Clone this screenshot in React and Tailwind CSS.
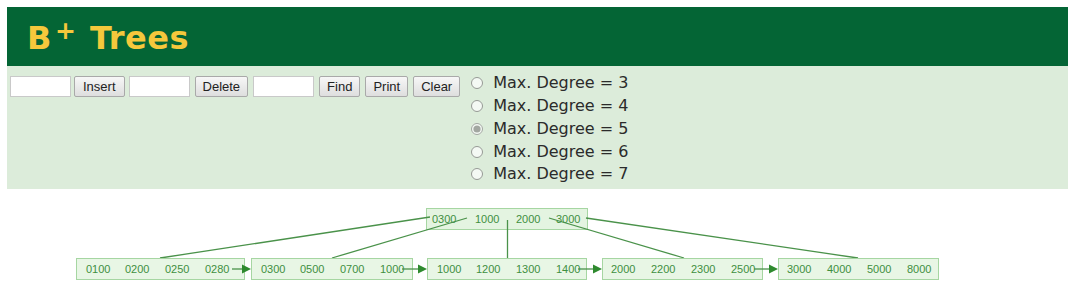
import React from 'react';

const leaves = [
    { x: 76, w: 168, keys: ['0100', '0200', '0250', '0280'], tx: [86, 125, 165, 205] },
    { x: 251, w: 161, keys: ['0300', '0500', '0700', '1000'], tx: [261, 300, 340, 380] },
    { x: 427, w: 159, keys: ['1000', '1200', '1300', '1400'], tx: [437, 476, 516, 556] },
    { x: 602, w: 160, keys: ['2000', '2200', '2300', '2500'], tx: [611, 651, 691, 731] },
    { x: 778, w: 160, keys: ['3000', '4000', '5000', '8000'], tx: [787, 827, 867, 907] },
];

// arrows between neighbouring leaves
const arrows = [
    [232, 251],
    [402, 427],
    [578, 602],
    [754, 778],
];

function Tree() {
    const green = '#3f8f3f';
    return (
        <svg width="1080" height="101" viewBox="0 190 1080 101" className="block">
            {/* root node */}
            <rect x="426.5" y="209.5" width="161" height="21" fill="#e4f4e1" stroke="#a6d6a2" />
            {['0300', '1000', '2000', '3000'].map((k, i) => (
                <text key={k} x={[432, 475, 516, 556][i]} y="224" fontSize="11" fill={green} fontFamily="'Liberation Sans', Arial, sans-serif">
                    {k}
                </text>
            ))}

            {/* child pointers */}
            <g stroke="#4a924a" strokeWidth="1.3" fill="none">
                <line x1="430" y1="218" x2="160" y2="259" />
                <line x1="467" y1="219" x2="332" y2="259" />
                <line x1="507.5" y1="221" x2="507.5" y2="259" />
                <line x1="549" y1="219" x2="684" y2="259" />
                <line x1="586" y1="219" x2="858" y2="259" />
            </g>

            {leaves.map((l) => (
                <g key={l.x}>
                    <rect x={l.x + 0.5} y="259.5" width={l.w} height="21" fill="#e8f6e5" stroke="#a6d6a2" />
                    {l.keys.map((k, i) => (
                        <text key={i} x={l.tx[i]} y="274" fontSize="11" fill={green} fontFamily="'Liberation Sans', Arial, sans-serif">
                            {k}
                        </text>
                    ))}
                </g>
            ))}

            {arrows.map(([a, b]) => (
                <g key={a}>
                    <line x1={a} y1="270" x2={b - 8} y2="270" stroke="#4a924a" strokeWidth="1.3" />
                    <polygon points={`${b - 9},265.5 ${b},270 ${b - 9},274.5`} fill="#2f8a2f" />
                </g>
            ))}
        </svg>
    );
}

function Button({ children, wide }) {
    return (
        <button
            className={`h-[21px] ${wide ? 'px-[8px]' : 'px-[7px]'} text-[13px] leading-none text-[#222] border border-[#a9a9a9] rounded-[2px] bg-gradient-to-b from-[#f7f7f7] to-[#dedede] font-['Liberation_Sans',Arial,sans-serif]`}
        >
            {children}
        </button>
    );
}

function Field() {
    return <input type="text" className="w-[61px] h-[21px] bg-white border border-[#c9c9c9] outline-none" />;
}

export default function App() {
    const degrees = [3, 4, 5, 6, 7];

    return (
        <div className="w-[1080px] h-[290px] bg-white overflow-hidden">
            <div className="pt-[7px] px-[7px] w-[1075px]">
                {/* header bar */}
                <div className="h-[59px] bg-[#046535] flex items-center pl-[20px] pt-[3px]">
                    <h1 className="text-[#f5c83c] font-bold text-[32px] leading-none font-['DejaVu_Sans',Verdana,sans-serif] tracking-[0.5px]">
                        B<sup className="text-[25px] relative -top-[10px] ml-[3px] mr-[2px]">+</sup> Trees
                    </h1>
                </div>

                {/* controls */}
                <div className="h-[123px] bg-[#dcecda] flex pl-[3px]">
                    <div className="flex items-start pt-[10px]">
                        <Field />
                        <div className="w-[3px]" />
                        <Button wide>Insert</Button>
                        <div className="w-[4px]" />
                        <Field />
                        <div className="w-[5px]" />
                        <Button>Delete</Button>
                        <div className="w-[5px]" />
                        <Field />
                        <div className="w-[5px]" />
                        <Button>Find</Button>
                        <div className="w-[5px]" />
                        <Button>Print</Button>
                        <div className="w-[5px]" />
                        <Button>Clear</Button>
                    </div>
                    <div className="flex flex-col pt-[6px] ml-[11px]">
                        {degrees.map((d) => (
                            <label key={d} className="h-[22.75px] flex items-center gap-[10px] text-[16px] text-[#2b2b2b] font-['DejaVu_Sans',Verdana,sans-serif]">
                                <input
                                    type="radio"
                                    name="degree"
                                    defaultChecked={d === 5}
                                    className="w-[12px] h-[12px] m-0 accent-[#8a8a8a] opacity-70"
                                />
                                <span>Max. Degree = {d}</span>
                            </label>
                        ))}
                    </div>
                </div>
            </div>

            <Tree />
        </div>
    );
}
